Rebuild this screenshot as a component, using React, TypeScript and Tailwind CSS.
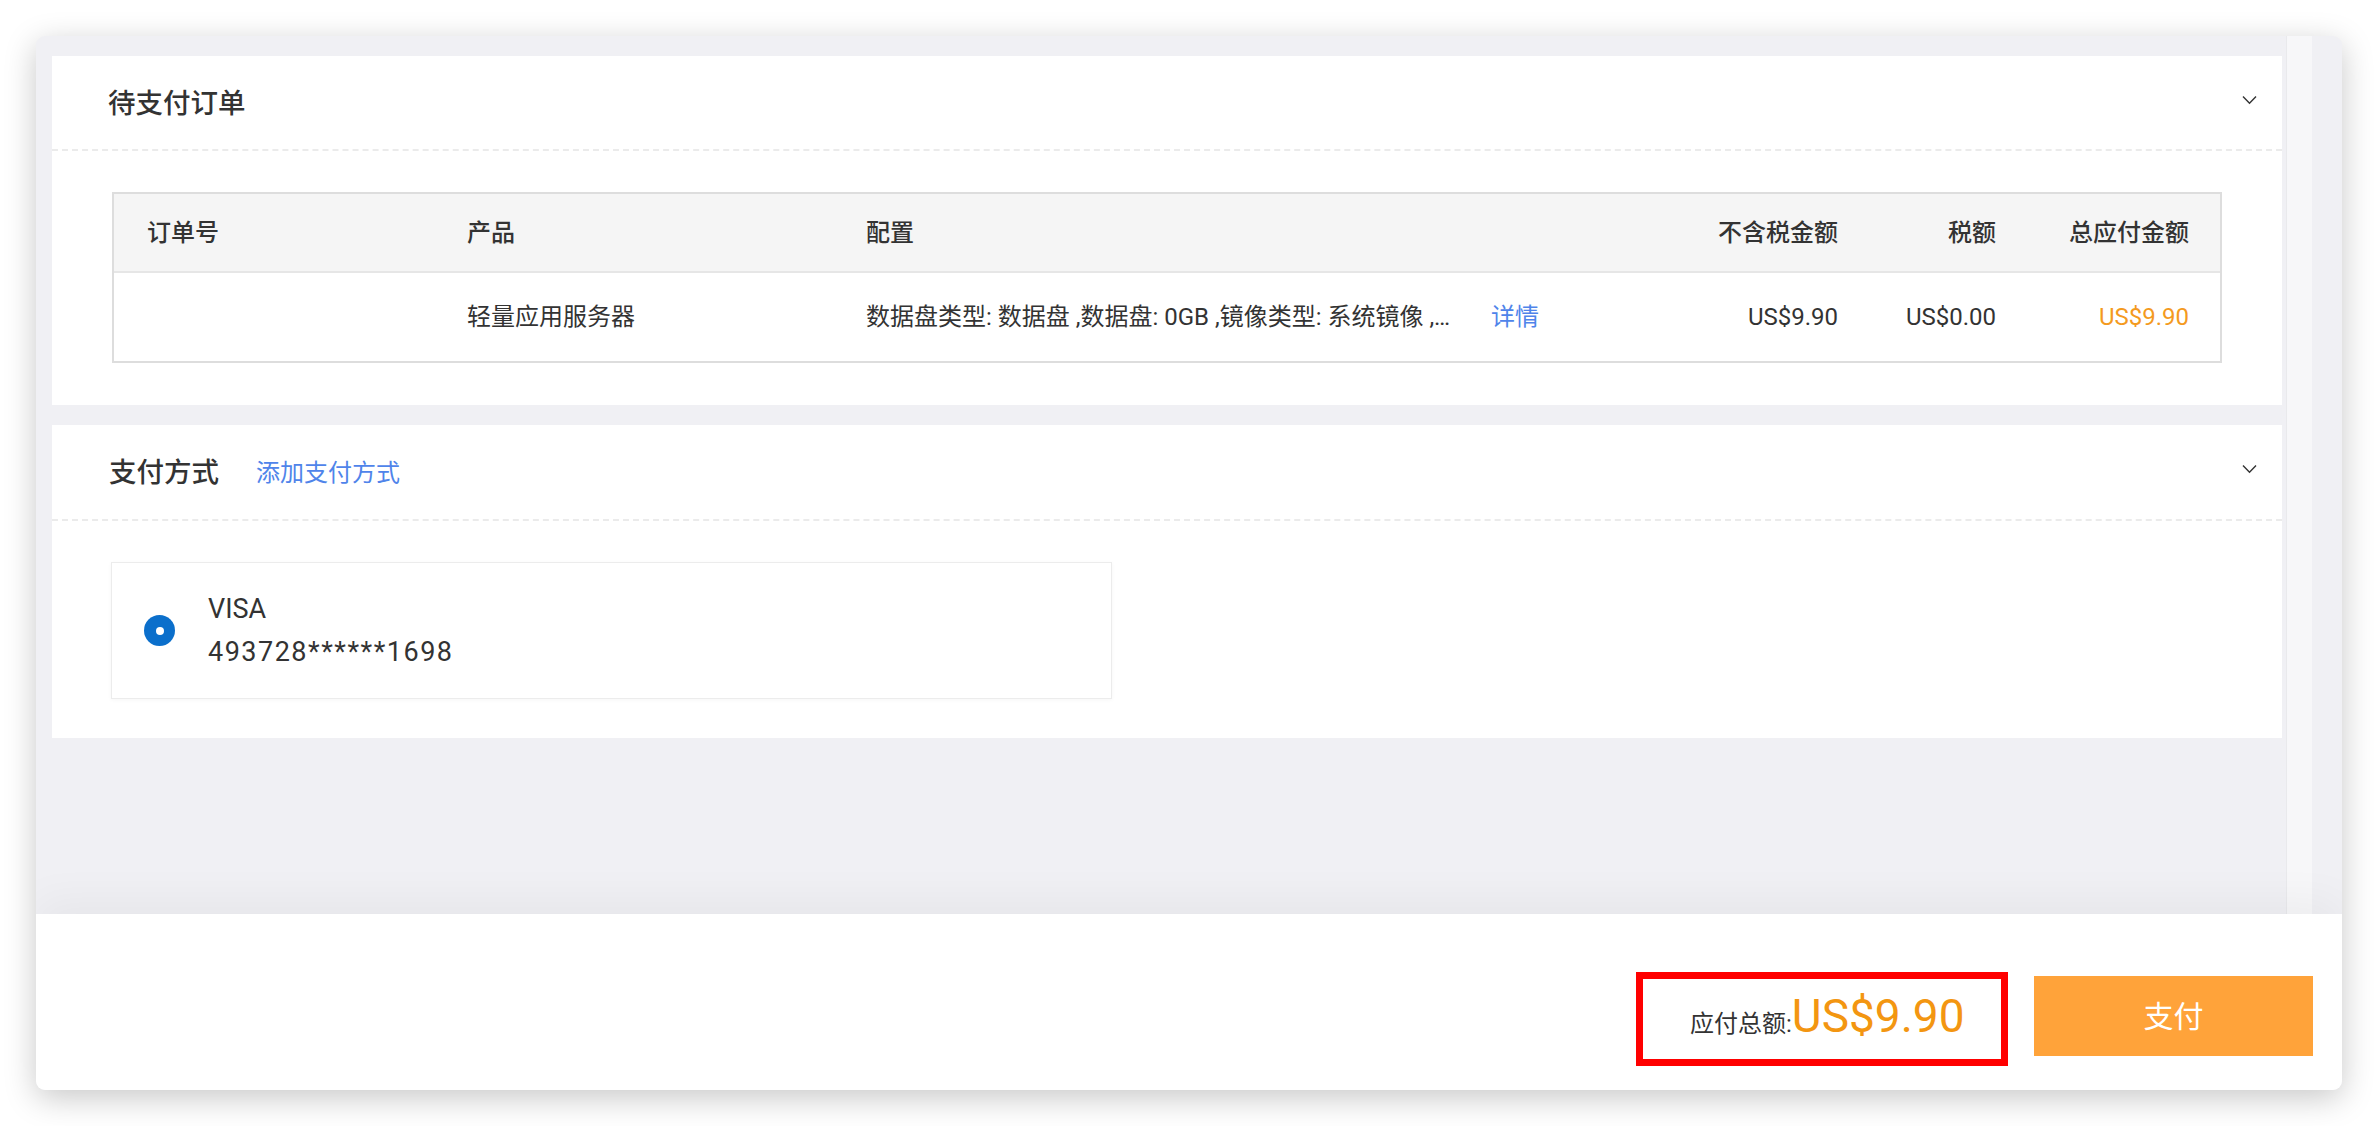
import React from 'react'

function Chevron() {
  return (
    <svg width="15" height="10" viewBox="0 0 15 10" fill="none">
      <path d="M1 1.5L7.5 8.2L14 1.5" stroke="#333333" strokeWidth="1.4" />
    </svg>
  )
}

const cols = 'grid grid-cols-[320px_399px_767px_271px_158px_1fr] items-center'

function OrderTable() {
  return (
    <div className="border-2 border-[#dddddd]">
      <div className={`${cols} h-[79px] bg-[#f5f5f5] border-b-2 border-[#e6e6e6] text-[24px] font-medium text-[#333333]`}>
        <div className="pl-[33px]">订单号</div>
        <div className="pl-[33px]">产品</div>
        <div className="pl-[33px]">配置</div>
        <div className="pr-[33px] text-right">不含税金额</div>
        <div className="pr-[33px] text-right">税额</div>
        <div className="pr-[31px] text-right">总应付金额</div>
      </div>
      <div className={`${cols} h-[88px] text-[24px] text-[#333333]`}>
        <div className="pl-[33px]"></div>
        <div className="pl-[33px]">轻量应用服务器</div>
        <div className="pl-[33px] flex items-center">
          <span className="w-[625px] whitespace-nowrap overflow-hidden">
            数据盘类型: 数据盘 ,数据盘: 0GB ,镜像类型: 系统镜像 ,…
          </span>
          <span className="text-[#4f84ea]">详情</span>
        </div>
        <div className="pr-[33px] text-right">US$9.90</div>
        <div className="pr-[33px] text-right">US$0.00</div>
        <div className="pr-[31px] text-right text-[#f49a1e]">US$9.90</div>
      </div>
    </div>
  )
}

export default function App() {
  return (
    <div className="w-[2378px] h-[1126px] bg-white p-[36px] font-[Roboto,'Noto_Sans_CJK_SC',sans-serif]">
      <div className="w-[2306px] h-[1054px] flex flex-col bg-[#f0f0f4] rounded-[9px] overflow-hidden shadow-[0_8px_32px_rgba(0,0,0,0.22)]">
        {/* scroll area */}
        <div className="flex-1 flex min-h-0">
          <div className="flex-1 pl-[16px] pr-[4px] pt-[20px] flex flex-col gap-[20px]">
            {/* 待支付订单 */}
            <div className="bg-white">
              <div className="h-[95px] flex items-center justify-between border-b-2 border-dashed border-[#ebebeb] pl-[56px] pr-[25px]">
                <h2 className="text-[27.5px] font-medium text-[#333333] pt-[3px]">待支付订单</h2>
                <div className="mb-[6px]">
                  <Chevron />
                </div>
              </div>
              <div className="px-[60px] pt-[41px] pb-[42px]">
                <OrderTable />
              </div>
            </div>

            {/* 支付方式 */}
            <div className="bg-white">
              <div className="h-[96px] flex items-center justify-between border-b-2 border-dashed border-[#ebebeb] pl-[57px] pr-[25px]">
                <div className="flex items-center pt-[2px]">
                  <h2 className="text-[27.5px] font-medium text-[#333333]">支付方式</h2>
                  <span className="ml-[37px] text-[24px] text-[#4f84ea]">添加支付方式</span>
                </div>
                <div className="mb-[6px]">
                  <Chevron />
                </div>
              </div>
              <div className="pl-[59px] pt-[41px] pb-[39px]">
                <div className="w-[1001px] h-[137px] border border-[#ececec] shadow-[0_1px_4px_rgba(0,0,0,0.04)] flex items-center pl-[32px]">
                  <div className="w-[31px] h-[31px] rounded-full bg-[#0b6fcb] flex items-center justify-center">
                    <div className="w-[8px] h-[8px] rounded-full bg-white"></div>
                  </div>
                  <div className="ml-[33px] text-[27px] leading-[43px] text-[#333333]">
                    <div>VISA</div>
                    <div className="tracking-[1.5px]">493728******1698</div>
                  </div>
                </div>
              </div>
            </div>
          </div>
          <div className="w-[26px] bg-[#f7f7f9] border-l border-[#e9e9ec]"></div>
          <div className="w-[30px]"></div>
        </div>

        {/* footer */}
        <div className="relative z-10 h-[176px] bg-white flex justify-end items-start pt-[58px] pr-[29px] shadow-[0_-14px_40px_rgba(0,0,0,0.045)]">
          <div className="w-[372px] h-[94px] border-[7px] border-[#ff0000] flex items-baseline pl-[47px] pt-[14px]">
            <span className="text-[24px] leading-none text-[#333333]">应付总额:</span>
            <span className="text-[46px] leading-none text-[#f39611]">US$9.90</span>
          </div>
          <button className="ml-[26px] mt-[4px] w-[279px] h-[80px] bg-[#ffa33a] text-white text-[30px] flex items-center justify-center">
            支付
          </button>
        </div>
      </div>
    </div>
  )
}
